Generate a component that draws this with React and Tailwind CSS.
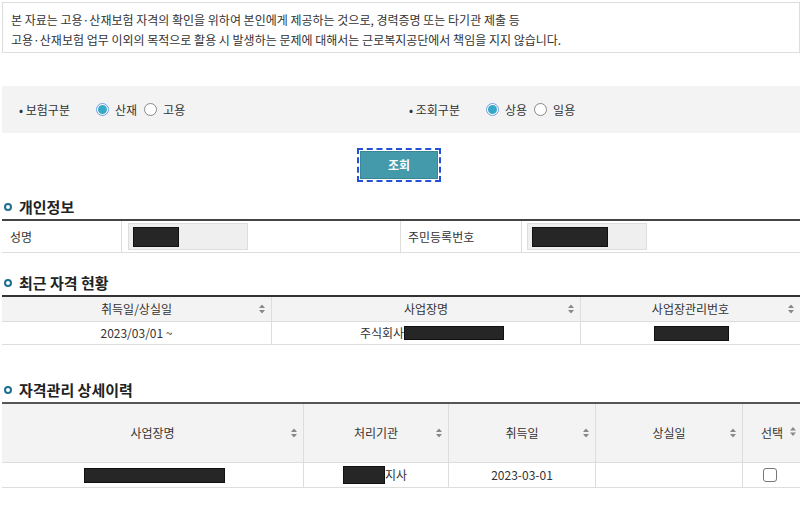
const FONT = { fontFamily: '"Noto Sans CJK KR", "Noto Sans", sans-serif' };

function SortIcon() {
  return (
    <svg width="6" height="9" viewBox="0 0 6 9" className="shrink-0">
      <path d="M3 0 L6 3.5 L0 3.5 Z" fill="#888" />
      <path d="M3 9 L6 5.5 L0 5.5 Z" fill="#888" />
    </svg>
  );
}

function Radio({ checked }) {
  return checked ? (
    <span className="w-[13px] h-[13px] rounded-full border border-[#6f9ee8] bg-white flex items-center justify-center">
      <span className="w-[9px] h-[9px] rounded-full bg-[#36a9c6]" />
    </span>
  ) : (
    <span className="w-[13px] h-[13px] rounded-full border border-[#888] bg-white" />
  );
}

function Heading({ children, className = '' }) {
  return (
    <div className={`flex items-center gap-[7px] pl-[2px] ${className}`}>
      <span className="w-[8px] h-[8px] rounded-full border-[2px] border-[#1d6f8f]" />
      <h2 className="text-[15px] font-bold text-[#222] leading-none">{children}</h2>
    </div>
  );
}

function Redact({ className }) {
  return <span className={`inline-block bg-[#262626] border border-[#111] ${className}`} />;
}

function HeadCell({ children, last, h }) {
  return (
    <div className={`relative flex items-center justify-center bg-[#f3f3f3] border-[#ddd] border-b ${last ? '' : 'border-r'} ${h}`}>
      <span>{children}</span>
      <span className="absolute right-[6px] top-1/2 -translate-y-1/2"><SortIcon /></span>
    </div>
  );
}

export default function App() {
  return (
    <div className="w-[800px] h-[518px] overflow-hidden bg-white text-[12px] text-[#333] pl-[2px] pt-[2px]" style={FONT}>
      <div className="border border-[#ddd] h-[51px] px-[8px] pt-[7px] leading-[20px] text-[12px] text-[#333]">
        <p>본 자료는 고용·산재보험 자격의 확인을 위하여 본인에게 제공하는 것으로, 경력증명 또는 타기관 제출 등</p>
        <p>고용·산재보험 업무 이외의 목적으로 활용 시 발생하는 문제에 대해서는 근로복지공단에서 책임을 지지 않습니다.</p>
      </div>

      <div className="mt-[33px] h-[47px] bg-[#f3f3f3] flex items-center">
        <div className="w-[398px] flex items-center pl-[17px]">
          <span className="w-[77px]">• 보험구분</span>
          <span className="flex items-center gap-[6px]"><Radio checked /> 산재</span>
          <span className="flex items-center gap-[6px] ml-[7px]"><Radio /> 고용</span>
        </div>
        <div className="flex items-center pl-[9px]">
          <span className="w-[77px]">• 조회구분</span>
          <span className="flex items-center gap-[6px]"><Radio checked /> 상용</span>
          <span className="flex items-center gap-[6px] ml-[7px]"><Radio /> 일용</span>
        </div>
      </div>

      <div className="flex justify-center mt-[15px] pr-[4px]">
        <div className="border-2 border-dashed border-[#2350d8] p-[1px]">
          <button className="w-[78px] h-[28px] bg-[#4499ab] border border-[#3b8797] text-white font-bold text-[12px]">조회</button>
        </div>
      </div>

      <Heading className="mt-[17px]">개인정보</Heading>
      <div className="mt-[5px] border-t-2 border-[#444] border-b border-b-[#ddd] h-[34px] flex">
        <div className="w-[120px] border-r border-[#ddd] flex items-center pl-[8px]">성명</div>
        <div className="w-[278px] flex items-center pl-[6px]">
          <div className="w-[120px] h-[27px] bg-[#efefef] border border-[#ddd] flex items-center pl-[4px]">
            <Redact className="w-[46px] h-[20px]" />
          </div>
        </div>
        <div className="w-[122px] border-l border-r border-[#ddd] flex items-center pl-[7px]">주민등록번호</div>
        <div className="flex-1 flex items-center pl-[5px]">
          <div className="w-[120px] h-[27px] bg-[#efefef] border border-[#ddd] flex items-center pl-[4px]">
            <Redact className="w-[76px] h-[20px]" />
          </div>
        </div>
      </div>

      <Heading className="mt-[22px]">최근 자격 현황</Heading>
      <div className="mt-[5px] border-t-2 border-[#333] grid grid-cols-[270px_309px_1fr]">
        <HeadCell h="h-[25px]">취득일/상실일</HeadCell>
        <HeadCell h="h-[25px]">사업장명</HeadCell>
        <HeadCell h="h-[25px]" last>사업장관리번호</HeadCell>
        <div className="h-[23px] flex items-center justify-center border-r border-b border-[#ddd]">2023/03/01 ~</div>
        <div className="h-[23px] flex items-center pl-[88px] border-r border-b border-[#ddd]">주식회사<Redact className="w-[100px] h-[14px]" /></div>
        <div className="h-[23px] flex items-center pl-[73px] border-b border-[#ddd]"><Redact className="w-[75px] h-[15px]" /></div>
      </div>

      <Heading className="mt-[37px]">자격관리 상세이력</Heading>
      <div className="mt-[5px] border-t-2 border-[#555] grid grid-cols-[302px_145px_147px_147px_1fr]">
        <HeadCell h="h-[59px]">사업장명</HeadCell>
        <HeadCell h="h-[59px]">처리기관</HeadCell>
        <HeadCell h="h-[59px]">취득일</HeadCell>
        <HeadCell h="h-[59px]">상실일</HeadCell>
        <div className="relative flex items-center bg-[#f3f3f3] border-b border-[#ddd] h-[59px] pl-[18px]">
          <span>선택</span>
          <span className="ml-[7px] -mt-[4px]"><SortIcon /></span>
        </div>
        <div className="h-[25px] flex items-center pl-[82px] border-r border-b border-[#ddd]"><Redact className="w-[141px] h-[15px]" /></div>
        <div className="h-[25px] flex items-center pl-[39px] border-r border-b border-[#ddd]"><Redact className="w-[42px] h-[18px]" />지사</div>
        <div className="h-[25px] flex items-center justify-center border-r border-b border-[#ddd]">2023-03-01</div>
        <div className="h-[25px] border-r border-b border-[#ddd]" />
        <div className="h-[25px] flex items-center pl-[20px] border-b border-[#ddd]">
          <span className="w-[14px] h-[14px] rounded-[3px] border border-[#777] bg-white" />
        </div>
      </div>
    </div>
  );
}
